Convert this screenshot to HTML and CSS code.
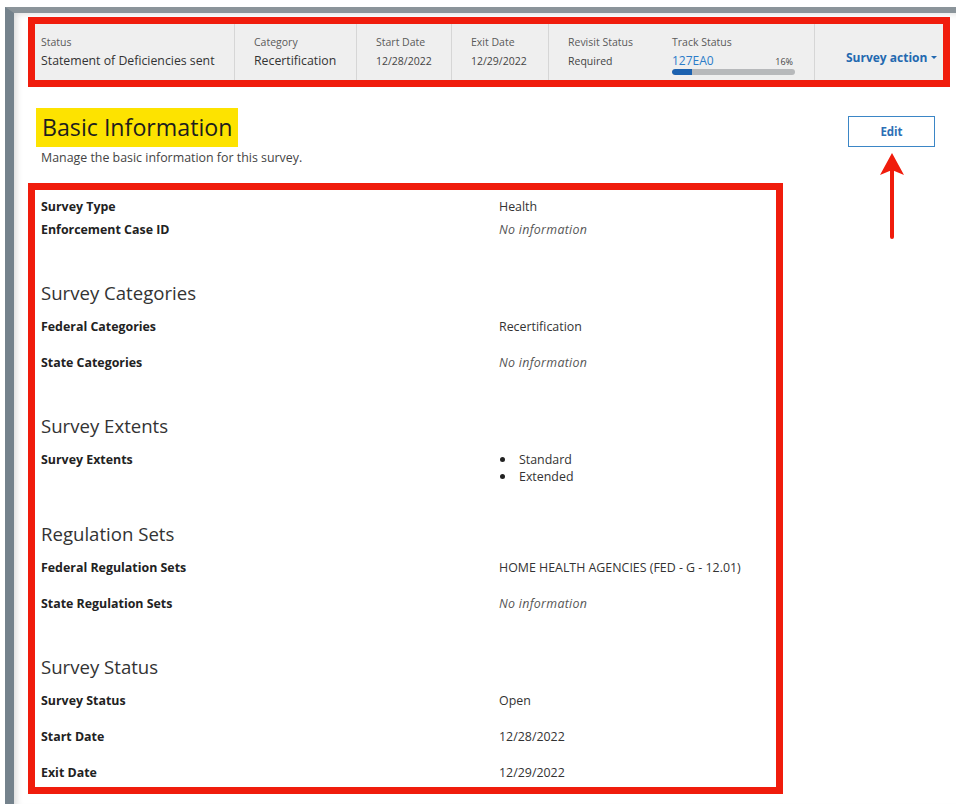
FILE: index.html
```html
<!DOCTYPE html>
<html lang="en">
<head>
<meta charset="utf-8">
<title>Survey - Basic Information</title>
<link rel="stylesheet" href="styles.css">
</head>
<body>
<div class="window">
  <div class="summary">
    <div class="cell cell-status divided">
      <div class="cell-label">Status</div>
      <div class="cell-value">Statement of Deficiencies sent</div>
    </div>
    <div class="cell cell-category divided">
      <div class="cell-label">Category</div>
      <div class="cell-value">Recertification</div>
    </div>
    <div class="cell cell-start divided">
      <div class="cell-label">Start Date</div>
      <div class="cell-value small">12/28/2022</div>
    </div>
    <div class="cell cell-exit divided">
      <div class="cell-label">Exit Date</div>
      <div class="cell-value small">12/29/2022</div>
    </div>
    <div class="cell cell-revisit">
      <div class="cell-label">Revisit Status</div>
      <div class="cell-value small">Required</div>
    </div>
    <div class="cell cell-track divided">
      <div class="cell-label">Track Status</div>
      <div class="track-row">
        <a class="track-link" href="#">127EA0</a>
        <span class="track-pct">16%</span>
      </div>
      <div class="progress"><div class="progress-fill" style="width:16%"></div></div>
    </div>
    <div class="cell cell-action">
      <a class="survey-action" href="#">Survey action<span class="caret"></span></a>
    </div>
  </div>

  <div class="main">
    <div class="page-head">
      <div class="page-title-block">
        <h1 class="page-title">Basic Information</h1>
        <p class="page-subtitle">Manage the basic information for this survey.</p>
      </div>
      <div class="edit-wrap">
        <button class="edit-btn" type="button">Edit</button>
        <svg class="edit-pointer" width="26" height="88" viewBox="0 0 26 88" aria-hidden="true">
          <line x1="13" y1="14" x2="13" y2="84" stroke="#f01c0c" stroke-width="4" stroke-linecap="round"/>
          <polygon points="13,0 25,22 13,17 1,22" fill="#f01c0c"/>
        </svg>
      </div>
    </div>

    <div class="details">
      <div class="rows rows-tight">
        <div class="row"><div class="label">Survey Type</div><div class="value">Health</div></div>
        <div class="row"><div class="label">Enforcement Case ID</div><div class="value empty">No information</div></div>
      </div>

      <section class="section">
        <h2 class="section-title">Survey Categories</h2>
        <div class="rows">
          <div class="row"><div class="label">Federal Categories</div><div class="value">Recertification</div></div>
          <div class="row"><div class="label">State Categories</div><div class="value empty">No information</div></div>
        </div>
      </section>

      <section class="section">
        <h2 class="section-title">Survey Extents</h2>
        <div class="rows">
          <div class="row">
            <div class="label">Survey Extents</div>
            <ul class="value value-list">
              <li>Standard</li>
              <li>Extended</li>
            </ul>
          </div>
        </div>
      </section>

      <section class="section section-after-list">
        <h2 class="section-title">Regulation Sets</h2>
        <div class="rows">
          <div class="row"><div class="label">Federal Regulation Sets</div><div class="value">HOME HEALTH AGENCIES (FED - G - 12.01)</div></div>
          <div class="row"><div class="label">State Regulation Sets</div><div class="value empty">No information</div></div>
        </div>
      </section>

      <section class="section">
        <h2 class="section-title">Survey Status</h2>
        <div class="rows">
          <div class="row"><div class="label">Survey Status</div><div class="value">Open</div></div>
          <div class="row"><div class="label">Start Date</div><div class="value">12/28/2022</div></div>
          <div class="row"><div class="label">Exit Date</div><div class="value">12/29/2022</div></div>
        </div>
      </section>
    </div>
  </div>
</div>
</body>
</html>
```

FILE: styles.css
```css
* {
  box-sizing: border-box;
}

html, body {
  margin: 0;
  padding: 0;
  background: #ffffff;
}

body {
  font-family: "Open Sans", "Noto Sans", "DejaVu Sans", sans-serif;
  color: #333;
  overflow: hidden;
}

/* application window frame */
.window {
  margin: 7px 0 0 5px;
  height: 797px;
  border-top: 6px solid #8b949a;
  border-left: 9px solid #74828c;
  background: #fff;
  box-shadow: inset 5px 3px 7px -3px rgba(0, 0, 0, 0.16);
  padding-top: 4px;
}

/* survey summary strip */
.summary {
  display: flex;
  margin: 0 6px 0 14px;
  height: 70px;
  border: 7px solid #f01c0c;
  background: #efefef;
}

.cell {
  padding: 11px 19px 0;
  flex: none;
}

.cell.divided {
  border-right: 1px solid #d6d6d6;
}

.cell-status { width: 200px; padding-left: 6px; }
.cell-category { width: 122px; }
.cell-start { width: 95px; }
.cell-exit { width: 97px; }
.cell-revisit { width: 104px; }
.cell-track { width: 162px; }
.cell-action {
  flex: 1;
  padding: 21px 0 0 31px;
}

.cell-label {
  font-size: 10.5px;
  line-height: 14px;
  color: #5a5a5a;
  margin-bottom: 4px;
  white-space: nowrap;
}

.cell-value {
  font-size: 12.3px;
  line-height: 16px;
  color: #333;
  white-space: nowrap;
}

.cell-value.small {
  font-size: 10.5px;
  color: #444;
}

.track-row {
  display: flex;
  justify-content: space-between;
  align-items: baseline;
  height: 16px;
  line-height: 16px;
}

.track-link {
  font-size: 12px;
  color: #2b7cc9;
  text-decoration: none;
}

.track-pct {
  font-size: 9px;
  color: #444;
  padding-right: 2px;
}

.progress {
  height: 6px;
  border-radius: 3px;
  background: #b7b9bb;
  overflow: hidden;
}

.progress-fill {
  height: 100%;
  background: #1c62b0;
  border-radius: 3px 0 0 3px;
}

.survey-action {
  font-size: 12px;
  line-height: 16px;
  font-weight: 700;
  color: #2369b0;
  text-decoration: none;
  white-space: nowrap;
}

.caret {
  display: inline-block;
  width: 0;
  height: 0;
  margin-left: 4px;
  vertical-align: 3px;
  border-left: 3px solid transparent;
  border-right: 3px solid transparent;
  border-top: 3px solid #2369b0;
}

/* page body */
.main {
  padding: 21px 0 0 14px;
}

.page-head {
  display: flex;
  justify-content: space-between;
  align-items: flex-start;
}

.page-title {
  display: inline-block;
  margin: 0 0 0 8px;
  padding: 0 6px;
  height: 39px;
  line-height: 39px;
  font-size: 23.2px;
  font-weight: 400;
  color: #1e1e1e;
  background: #fde300;
}

.page-subtitle {
  margin: 3px 0 0 13px;
  font-size: 12.4px;
  line-height: 16px;
  color: #444;
}

.edit-wrap {
  position: relative;
  margin: 8px 21px 0 0;
}

.edit-btn {
  display: block;
  width: 87px;
  height: 31px;
  border: 1.5px solid #3b86c6;
  background: #fff;
  font-family: inherit;
  font-size: 11.5px;
  font-weight: 700;
  color: #2d6fb5;
  cursor: pointer;
}

/* callout pointing at the edit button */
.edit-pointer {
  position: absolute;
  left: 31px;
  top: 37px;
}

/* details panel */
.details {
  margin-top: 17px;
  width: 755px;
  border: 7px solid #f01c0c;
  padding: 8px 6px 5px 6px;
}

.rows {
  display: grid;
  row-gap: 18px;
}

.rows-tight {
  row-gap: 5px;
}

.row {
  display: grid;
  grid-template-columns: 458px 1fr;
  font-size: 12.4px;
  line-height: 18px;
}

.label {
  font-weight: 700;
  color: #222;
}

.value {
  color: #333;
}

.value.empty {
  font-style: italic;
  letter-spacing: 0.3px;
  color: #555;
}

.value-list {
  list-style: none;
  margin: 0;
  padding: 0;
}

.value-list li {
  display: flex;
  align-items: center;
  line-height: 17px;
}

.value-list li::before {
  content: "";
  flex: none;
  width: 5px;
  height: 5px;
  margin: 0 14px 0 1px;
  border-radius: 50%;
  background: #222;
}

.section-title {
  margin: 41px 0 12px;
  font-size: 18.6px;
  line-height: 26px;
  font-weight: 400;
  color: #333;
}

.section-after-list .section-title {
  margin-top: 36px;
}
```
